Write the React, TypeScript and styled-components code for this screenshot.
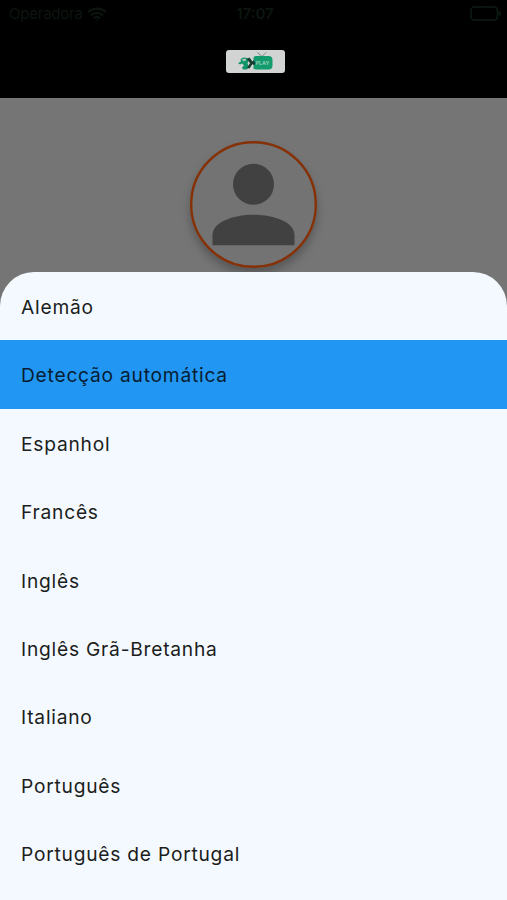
import React from "react";
import styled, { createGlobalStyle } from "styled-components";

const GlobalStyle = createGlobalStyle`
  * { box-sizing: border-box; }
  body { margin: 0; background: #757575; }
`;

const Screen = styled.main`
  position: relative;
  width: 507px;
  height: 900px;
  overflow: hidden;
  background: #757575;
  font-family: Inter, "Liberation Sans", sans-serif;
`;

const Header = styled.header`
  height: 98px;
  background: #000;
`;

const StatusBar = styled.div`
  display: grid;
  grid-template-columns: 1fr auto 1fr;
  align-items: center;
  height: 28px;
  padding: 0 6px 0 9px;
  color: #0c150f;
`;

const Carrier = styled.div`
  display: flex;
  align-items: center;
  gap: 4px;
  font-size: 15px;
  line-height: 20px;
  letter-spacing: -0.22px;
`;

const Clock = styled.time`
  font-size: 15px;
  font-weight: 600;
  line-height: 20px;
`;

const BatterySlot = styled.div`
  display: flex;
  justify-content: flex-end;
  padding-bottom: 2px;
`;

const BrandBar = styled.div`
  display: flex;
  justify-content: center;
  padding: 22px 0 0 4px;
`;

const Brand = styled.div`
  display: flex;
  width: 59px;
  height: 23px;
  overflow: hidden;
  border-radius: 3px;
  background: #d2d3d3;
`;

const Profile = styled.section`
  display: flex;
  justify-content: center;
  padding: 43px 0 0;
`;

const Avatar = styled.div`
  display: flex;
  width: 127px;
  height: 127px;
  border-radius: 50%;
  background: #737373;
  box-shadow: 0 6px 10px rgba(0, 0, 0, 0.26);
`;

const Sheet = styled.ul`
  position: absolute;
  right: 0;
  bottom: 0;
  left: 0;
  height: 628px;
  margin: 0;
  padding: 0;
  overflow: hidden;
  border-radius: 34px 34px 0 0;
  background: #f4f9ff;
  list-style: none;
`;

const Option = styled.li<{ $selected: boolean }>`
  display: flex;
  align-items: center;
  height: 68.4px;
  padding: 1.7px 21px 0;
  background: ${({ $selected }) => ($selected ? "#2196f3" : "transparent")};
  color: ${({ $selected }) => ($selected ? "#071d31" : "#1b1d20")};
  font-size: 19.2px;
  line-height: 26px;
  letter-spacing: 0.77px;
`;

const languages = [
  "Alemão",
  "Detecção automática",
  "Espanhol",
  "Francês",
  "Inglês",
  "Inglês Grã-Bretanha",
  "Italiano",
  "Português",
  "Português de Portugal",
];

const WifiIcon = () => (
  <svg width="20" height="15" viewBox="0 0 20 15" fill="none" stroke="currentColor" strokeWidth="2.2">
    <path d="M1 5.2C6 .5 14 .5 19 5.2M4 8.3c3.5-3.1 8.5-3.1 12 0M7 11.2c1.8-1.5 4.2-1.5 6 0" />
    <path d="m8.3 12.4 1.7 1.7 1.7-1.7Z" fill="currentColor" stroke="none" />
  </svg>
);

const BatteryIcon = () => (
  <svg width="31" height="15" viewBox="0 0 31 15" fill="none" stroke="#0d1d13">
    <rect x="1" y="1" width="26.5" height="13" rx="3.5" strokeWidth="1.5" />
    <path d="M29.6 5.5v4" strokeWidth="2" />
  </svg>
);

const BrandLogo = () => (
  <svg width="59" height="23" viewBox="0 0 59 23">
    <path d="m12 13 3-1.500-.5-2.500 3-1.500 4 .5 1 3-1 2.500 1.500 3-2 3h-4l-1-2 2-2-2-2-2 1Z" fill="#10946a" />
    <path d="m15.500 9.500 3.500-1 1.500 1.500-2.500 1.500Z" fill="#a9c6b8" />
    <path d="m20.500 9 3-1.500 3 4 4-5V18.500l-4-4.500-3 4.500-2.500-.5 3-5Z" fill="#173e33" />
    <path d="m31.500 2.500 4.500 4 4-4" fill="none" stroke="#55756a" strokeWidth=".8" />
    <path d="M30 6h12.500q4 0 4 4v5.500q0 4-4 4H30q-3.500 0-2.500-3l2-3.500-2-3.500Q27 6 30 6Z" fill="#129b6c" />
    <text x="36.500" y="14.600" textAnchor="middle" fill="#9bd2bf" fontFamily="Inter" fontSize="5.400" fontWeight="600">PLAY</text>
  </svg>
);

const PersonIcon = () => (
  <svg width="127" height="127" viewBox="0 0 127 127" fill="#414141">
    <circle cx="63.500" cy="63.500" r="62.300" fill="none" stroke="#863006" strokeWidth="2.400" />
    <circle cx="63.500" cy="43.300" r="20.500" />
    <path d="M22.500 104.300v-10c0-13 20-20.500 41-20.500s41 7.500 41 20.500v10Z" />
  </svg>
);

export default function App() {
  return (
    <Screen>
      <GlobalStyle />
      <Header>
        <StatusBar>
          <Carrier>
            Operadora
            <WifiIcon />
          </Carrier>
          <Clock>17:07</Clock>
          <BatterySlot>
            <BatteryIcon />
          </BatterySlot>
        </StatusBar>
        <BrandBar>
          <Brand>
            <BrandLogo />
          </Brand>
        </BrandBar>
      </Header>
      <Profile>
        <Avatar>
          <PersonIcon />
        </Avatar>
      </Profile>
      <Sheet>
        {languages.map((language) => (
          <Option key={language} $selected={language === "Detecção automática"}>
            {language}
          </Option>
        ))}
      </Sheet>
    </Screen>
  );
}
